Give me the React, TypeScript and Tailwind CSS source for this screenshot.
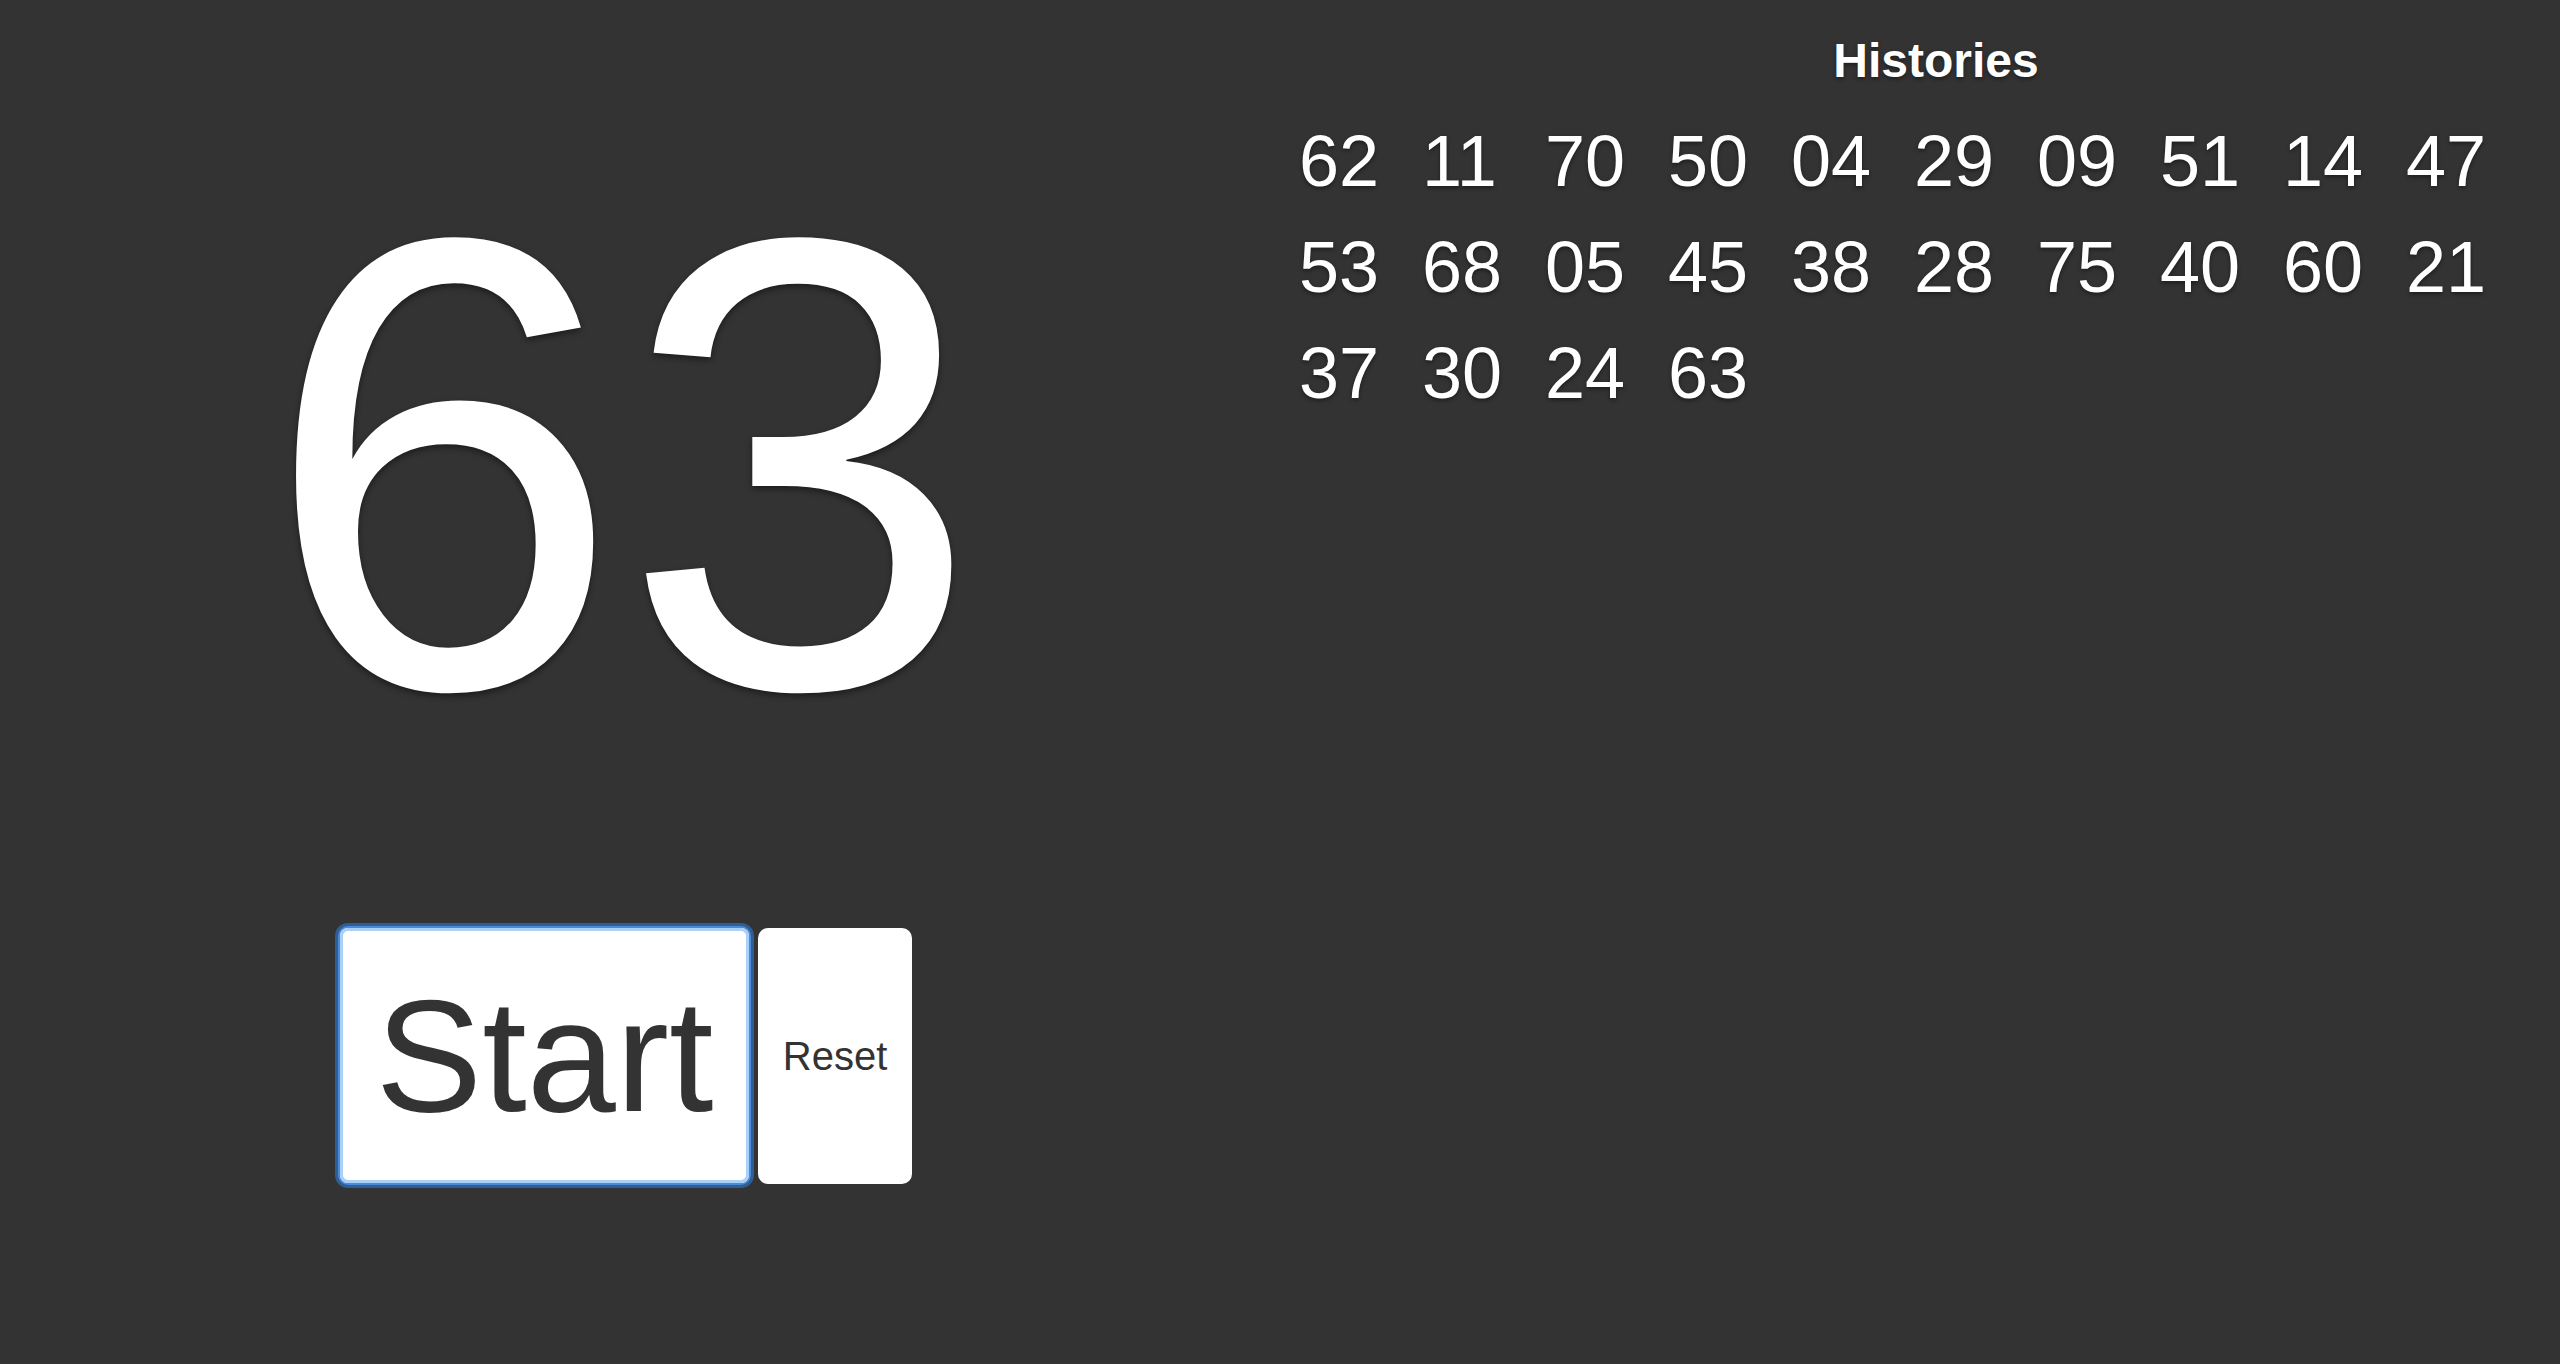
import React from "react";

const histories = [
  "62", "11", "70", "50", "04", "29", "09", "51", "14", "47",
  "53", "68", "05", "45", "38", "28", "75", "40", "60", "21",
  "37", "30", "24", "63",
];

export default function App() {
  return (
    <div
      className="min-h-screen w-full bg-[#333333] text-white flex flex-row overflow-hidden"
      style={{ fontFamily: '"Liberation Sans", Arial, Helvetica, sans-serif' }}
    >
      {/* Left column */}
      <div className="w-[1243px] shrink-0 flex flex-col items-center">
        <div className="mt-[144px] h-[640px] text-[644px] leading-[640px] [text-shadow:0_3px_6px_rgba(0,0,0,0.45)]">
          63
        </div>
        <div className="mt-[144px] pl-[9px] flex flex-row gap-[9px]">
          <button className="w-[409px] h-[255px] bg-white rounded-[8px] text-[#333333] text-[160px] leading-none flex items-center justify-center shadow-[inset_0_0_0_3px_#a9d0f7,0_0_0_2px_#4a8ad8,0_0_0_5px_#2f5e95]">
            Start
          </button>
          <button className="w-[154px] h-[256px] bg-white rounded-[10px] text-[#333333] text-[40px] leading-none flex items-center justify-center">
            Reset
          </button>
        </div>
      </div>

      {/* Right column */}
      <div className="flex-1 flex flex-col pl-[56px]">
        <div className="ml-[13px] mt-[37px] h-[48px] text-center text-[48px] font-bold leading-none [text-shadow:0_2px_4px_rgba(0,0,0,0.45)]">
          Histories
        </div>
        <div className="mt-[23px] grid grid-cols-[repeat(10,123px)] auto-rows-[106px]">
          {histories.map((n, i) => (
            <span
              key={i}
              className="text-[72px] leading-[106px] [text-shadow:0_2px_4px_rgba(0,0,0,0.45)]"
            >
              {n}
            </span>
          ))}
        </div>
      </div>
    </div>
  );
}
